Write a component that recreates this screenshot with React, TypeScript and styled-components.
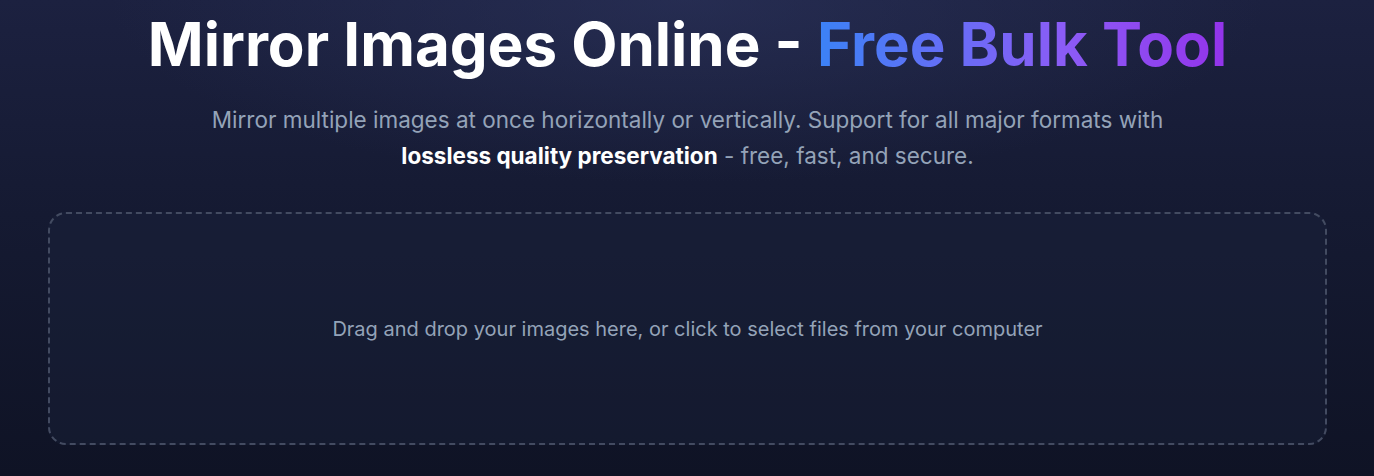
import React from "react";
import styled, { createGlobalStyle } from "styled-components";

const GlobalStyle = createGlobalStyle`
  html, body {
    margin: 0;
    padding: 0;
    background: #11152a;
  }
  body {
    font-family: Inter, "Noto Sans", "Liberation Sans", sans-serif;
    -webkit-font-smoothing: antialiased;
  }
`;

const Page = styled.div`
  min-height: 476px;
  box-sizing: border-box;
  padding: 8px 47px 30px 48px;
  background:
    radial-gradient(ellipse 60% 55% at 50% 0%, rgba(46, 54, 96, 0.55), transparent 70%),
    linear-gradient(180deg, #1c2140 0%, #151a32 45%, #0f1325 100%);
  display: flex;
  flex-direction: column;
  align-items: center;
`;

const Title = styled.h1`
  margin: 0;
  font-size: 60px;
  line-height: 72px;
  font-weight: 700;
  letter-spacing: 0;
  color: #ffffff;
  text-align: center;
`;

const Gradient = styled.span`
  background: linear-gradient(90deg, #3b82f6 0%, #8b5cf6 60%, #9333ea 100%);
  -webkit-background-clip: text;
  background-clip: text;
  color: transparent;
`;

const Lead = styled.p`
  margin: 22px 0 0;
  max-width: 980px;
  font-size: 22.5px;
  line-height: 36px;
  color: #94a3b8;
  text-align: center;
`;

const Strong = styled.strong`
  color: #ffffff;
  font-weight: 700;
`;

const DropZone = styled.div`
  margin-top: 38px;
  align-self: stretch;
  height: 233px;
  box-sizing: border-box;
  border: 2px dashed #434b61;
  border-radius: 18px;
  background: rgba(30, 38, 62, 0.35);
  display: flex;
  align-items: center;
  justify-content: center;
  cursor: pointer;
`;

const Hint = styled.p`
  margin: 0;
  font-size: 20px;
  color: #94a3b8;
`;

export default function App() {
  return (
    <>
      <GlobalStyle />
      <Page>
        <Title>
          Mirror Images Online - <Gradient>Free Bulk Tool</Gradient>
        </Title>
        <Lead>
          Mirror multiple images at once horizontally or vertically. Support for all major formats with{" "}
          <Strong>lossless quality preservation</Strong> - free, fast, and secure.
        </Lead>
        <DropZone>
          <Hint>Drag and drop your images here, or click to select files from your computer</Hint>
        </DropZone>
      </Page>
    </>
  );
}
